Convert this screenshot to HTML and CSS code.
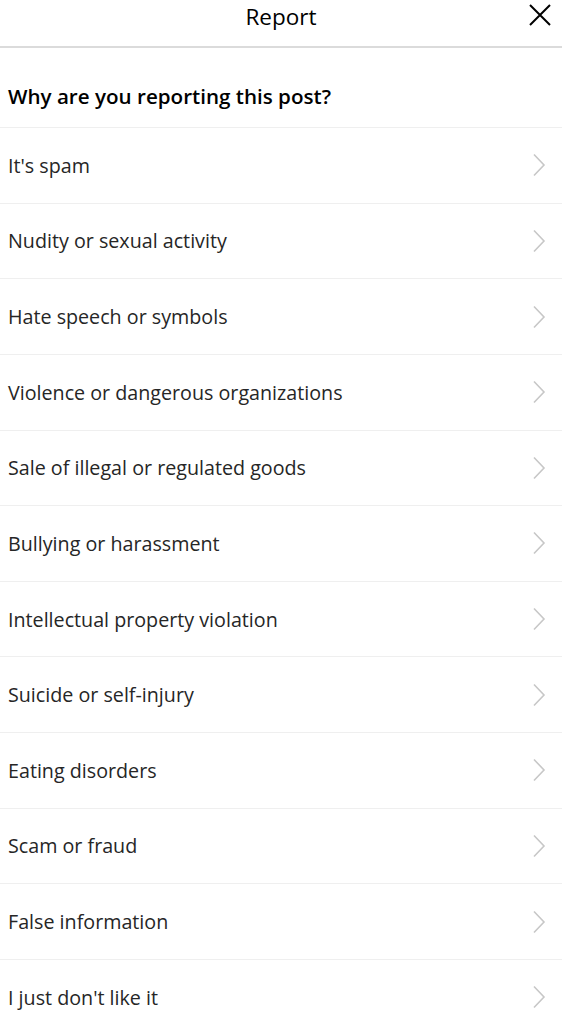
FILE: index.html
```html
<!DOCTYPE html>
<html lang="en">
<head>
    <meta charset="UTF-8">
    <meta name="viewport" content="width=device-width, initial-scale=1.0">
    <title>Report</title>
    <link rel="stylesheet" href="styles.css">
</head>
<body>
    <!-- 顶部标题栏 -->
    <div class="header">
        <div class="title">Report</div>
        <button class="close-btn" aria-label="Close">
            <svg width="24" height="24" viewBox="0 0 24 24">
                <path d="M2 2 L22 22 M22 2 L2 22" stroke="#000" stroke-width="2" fill="none"/>
            </svg>
        </button>
    </div>

    <h2 class="question">Why are you reporting this post?</h2>

    <!-- 举报原因列表 -->
    <div class="reasons">
        <button class="reason">It's spam</button>
        <button class="reason">Nudity or sexual activity</button>
        <button class="reason">Hate speech or symbols</button>
        <button class="reason">Violence or dangerous organizations</button>
        <button class="reason">Sale of illegal or regulated goods</button>
        <button class="reason">Bullying or harassment</button>
        <button class="reason">Intellectual property violation</button>
        <button class="reason">Suicide or self-injury</button>
        <button class="reason">Eating disorders</button>
        <button class="reason">Scam or fraud</button>
        <button class="reason">False information</button>
        <button class="reason">I just don't like it</button>
    </div>

    <script>
        // 每一行右侧的箭头
        const chevron = `
            <svg class="chevron" width="14" height="24" viewBox="0 0 14 24">
                <path d="M2 1.5 L12 12 L2 22.5" stroke="#c7c7c7" stroke-width="1.6" fill="none"/>
            </svg>`;
        document.querySelectorAll('.reason').forEach(btn => {
            btn.innerHTML = `<span>${btn.textContent}</span>${chevron}`;
        });
    </script>
</body>
</html>
```

FILE: styles.css
```css
body {
    font-family: 'Open Sans', 'Noto Sans', sans-serif;
    background-color: #fff;
    color: #262626;
    margin: 0;
}

.header {
    position: relative;
    height: 46px;
    border-bottom: 2px solid #dbdbdb;
    display: flex;
    justify-content: center;
}

.title {
    font-size: 22.5px;
    line-height: 33px;
    color: #000;
}

.close-btn {
    position: absolute;
    right: 10px;
    top: 3px;
    padding: 0;
    border: none;
    background: none;
    cursor: pointer;
}

.close-btn svg {
    display: block;
}

.question {
    margin: 0;
    height: 80px;
    padding: 18px 8px 2px;
    box-sizing: border-box;
    display: flex;
    align-items: center;
    font-size: 20.6px;
    font-weight: 600;
    color: #000;
    border-bottom: 1px solid #efefef;
}

.reasons {
    display: flex;
    flex-direction: column;
}

.reason {
    height: 75.64px;
    padding: 0 16px 0 8px;
    display: flex;
    align-items: center;
    justify-content: space-between;
    border: none;
    border-bottom: 1px solid #efefef;
    background: #fff;
    font-family: inherit;
    font-size: 19.7px;
    color: #262626;
    text-align: left;
    cursor: pointer;
}

.chevron {
    display: block;
}
```
